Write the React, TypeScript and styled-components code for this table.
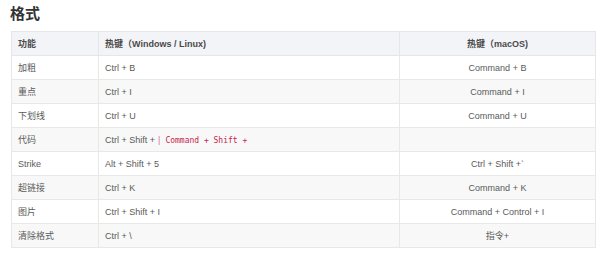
import styled, { createGlobalStyle } from "styled-components";

const GlobalStyle = createGlobalStyle`
    body {
        margin: 0;
        background: #ffffff;
        font-family: "Liberation Sans", Arial, "Noto Sans CJK SC", sans-serif;
        color: #5a5a5a;
    }
`;

const Page = styled.div`
    padding: 5px 5px 0 11px;
`;

const Title = styled.h2`
    margin: 0 0 8px -1px;
    font-size: 15px;
    line-height: 18px;
    font-weight: 700;
    color: #333333;
`;

const Table = styled.table`
    width: 584px;
    border-collapse: collapse;
    table-layout: fixed;
    font-size: 9px;
`;

const HeadCell = styled.th<{ center?: boolean }>`
    height: 23px;
    padding: 0 6px;
    background: #f2f4f7;
    border: 1px solid #e4e6ea;
    font-weight: 700;
    color: #4a4a4a;
    text-align: ${({ center }) => (center ? "center" : "left")};
`;

const Row = styled.tr<{ shaded: boolean }>`
    background: ${({ shaded }) => (shaded ? "#f8f8f8" : "#ffffff")};
`;

const Cell = styled.td<{ center?: boolean }>`
    height: 23px;
    padding: 0 6px;
    border: 1px solid #e8e8e8;
    text-align: ${({ center }) => (center ? "center" : "left")};
`;

const Code = styled.code`
    font-family: "DejaVu Sans Mono", "Liberation Mono", monospace;
    font-size: 8px;
    color: #c7254e;
`;

const Pipe = styled.span`
    color: #e0709a;
    margin: 0 5px 0 3px;
`;

const rows: { name: string; win: React.ReactNode; mac: string }[] = [
    { name: "加粗", win: "Ctrl + B", mac: "Command + B" },
    { name: "重点", win: "Ctrl + I", mac: "Command + I" },
    { name: "下划线", win: "Ctrl + U", mac: "Command + U" },
    {
        name: "代码",
        win: (
            <>
                Ctrl + Shift +<Pipe>|</Pipe>
                <Code>Command + Shift +</Code>
            </>
        ),
        mac: "",
    },
    { name: "Strike", win: "Alt + Shift + 5", mac: "Ctrl + Shift +`" },
    { name: "超链接", win: "Ctrl + K", mac: "Command + K" },
    { name: "图片", win: "Ctrl + Shift + I", mac: "Command + Control + I" },
    { name: "清除格式", win: "Ctrl + \\", mac: "指令+" },
];

export default function App() {
    return (
        <Page>
            <GlobalStyle />
            <Title>格式</Title>
            <Table>
                <colgroup>
                    <col style={{ width: 87 }} />
                    <col style={{ width: 301 }} />
                    <col style={{ width: 196 }} />
                </colgroup>
                <thead>
                    <tr>
                        <HeadCell>功能</HeadCell>
                        <HeadCell>热键（Windows / Linux)</HeadCell>
                        <HeadCell center>热键（macOS)</HeadCell>
                    </tr>
                </thead>
                <tbody>
                    {rows.map((row, i) => (
                        <Row key={row.name} shaded={i % 2 === 1}>
                            <Cell>{row.name}</Cell>
                            <Cell>{row.win}</Cell>
                            <Cell center>{row.mac}</Cell>
                        </Row>
                    ))}
                </tbody>
            </Table>
        </Page>
    );
}
